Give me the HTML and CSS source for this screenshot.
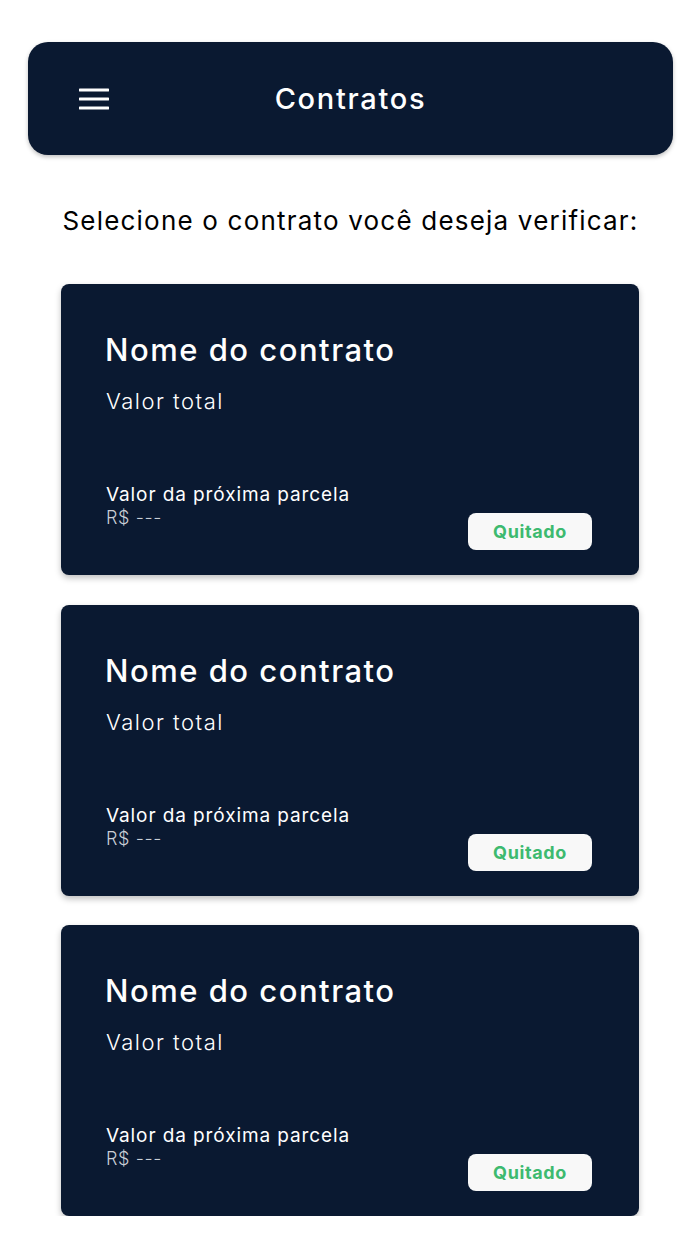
FILE: index.html
```html
<!DOCTYPE html>
<html lang="pt-BR">
<head>
    <meta charset="UTF-8">
    <meta name="viewport" content="width=device-width, initial-scale=1.0">
    <title>Contratos</title>
    <link rel="stylesheet" href="styles.css">
</head>
<body>
<div class="page">
    <header class="topbar">
        <button class="menu-button" aria-label="Menu">
            <svg width="30" height="24" viewBox="0 0 30 24">
                <path d="M1 3H29M1 12H29M1 21H29" stroke="#ffffff" stroke-width="3" stroke-linecap="round"/>
            </svg>
        </button>
        <h1 class="topbar-title">Contratos</h1>
    </header>

    <p class="subtitle">Selecione o contrato você deseja verificar:</p>

    <div class="contract-list">
        <div class="contract-card">
            <h2 class="contract-name">Nome do contrato</h2>
            <div class="contract-total">Valor total</div>
            <div class="contract-footer">
                <div class="installment">
                    <div class="installment-label">Valor da próxima parcela</div>
                    <div class="installment-value">R$ ---</div>
                </div>
                <span class="status">Quitado</span>
            </div>
        </div>
        <div class="contract-card">
            <h2 class="contract-name">Nome do contrato</h2>
            <div class="contract-total">Valor total</div>
            <div class="contract-footer">
                <div class="installment">
                    <div class="installment-label">Valor da próxima parcela</div>
                    <div class="installment-value">R$ ---</div>
                </div>
                <span class="status">Quitado</span>
            </div>
        </div>
        <div class="contract-card">
            <h2 class="contract-name">Nome do contrato</h2>
            <div class="contract-total">Valor total</div>
            <div class="contract-footer">
                <div class="installment">
                    <div class="installment-label">Valor da próxima parcela</div>
                    <div class="installment-value">R$ ---</div>
                </div>
                <span class="status">Quitado</span>
            </div>
        </div>
    </div>
</div>
</body>
</html>
```

FILE: styles.css
```css
body {
    font-family: Inter, 'Noto Sans', sans-serif;
    background-color: #ffffff;
    margin: 0;
    padding: 0;
    color: #000;
}
.page {
    padding: 42px 27px 0 28px;
}
.topbar {
    background-color: #0a1931;
    border-radius: 20px;
    height: 113px;
    display: flex;
    align-items: center;
    position: relative;
    box-shadow: 0 2px 4px rgba(0, 0, 0, 0.25);
}
.menu-button {
    background: none;
    border: none;
    padding: 0;
    margin-left: 51px;
    width: 30px;
    height: 24px;
    display: flex;
    cursor: pointer;
}
.topbar-title {
    position: absolute;
    left: 0;
    right: 0;
    margin: 0;
    text-align: center;
    color: #fff;
    font-size: 29px;
    font-weight: 500;
    letter-spacing: 1.7px;
    pointer-events: none;
}
.subtitle {
    margin: 48px 0 0 0;
    text-align: center;
    font-size: 26px;
    letter-spacing: 1.2px;
    line-height: 36px;
}
.contract-list {
    display: flex;
    flex-direction: column;
    gap: 29.5px;
    padding: 45px 34px 0 33px;
}
.contract-card {
    background-color: #0a1931;
    border-radius: 8px;
    height: 291px;
    box-sizing: border-box;
    padding: 44px 47px 0 44px;
    display: flex;
    flex-direction: column;
    color: #fff;
    box-shadow: 0 3px 6px rgba(0, 0, 0, 0.25);
}
.contract-name {
    margin: 0;
    font-size: 31px;
    font-weight: 500;
    letter-spacing: 1.5px;
    line-height: 44px;
}
.contract-total {
    margin: 13px 0 0 1px;
    font-size: 22px;
    font-weight: 300;
    letter-spacing: 1.5px;
    line-height: 32px;
}
.contract-footer {
    display: flex;
    justify-content: space-between;
    align-items: flex-start;
    margin-top: 66px;
    padding-left: 1px;
}
.installment-label {
    font-size: 19px;
    letter-spacing: 0.9px;
    line-height: 24px;
}
.installment-value {
    font-size: 18px;
    font-weight: 300;
    letter-spacing: 0.6px;
    line-height: 22px;
    color: #c9ced6;
}
.status {
    margin-top: 30px;
    background-color: #f8f8f8;
    border-radius: 8px;
    width: 124px;
    height: 37px;
    display: flex;
    align-items: center;
    justify-content: center;
    color: #3dba6f;
    font-weight: 700;
    font-size: 18px;
    letter-spacing: 0.6px;
}
```
